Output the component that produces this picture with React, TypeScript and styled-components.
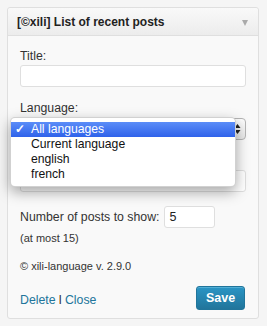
import React from "react";
import styled, { createGlobalStyle } from "styled-components";

const GlobalStyle = createGlobalStyle`
  body {
    margin: 0;
    background: #f5f5f5;
    font-family: "Liberation Sans", Arial, sans-serif;
    color: #333;
  }
`;

const languages = ["All languages", "Current language", "english", "french"];

const App = () => {
  return (
    <>
      <GlobalStyle />
      <Page>
        <Widget>
          <Header>
            <h3>[©xili] List of recent posts</h3>
            <Toggle />
          </Header>
          <Body>
            <Field>
              <Label>Title:</Label>
              <TextInput />
            </Field>
            <Field $gap={2}>
              <Label>Language:</Label>
              <SelectBox>
                <Stepper>
                  <svg width="7" height="12" viewBox="0 0 7 12">
                    <path d="M3.5 1 L6.5 5 L0.5 5 Z" fill="#222" />
                    <path d="M3.5 11 L6.5 7 L0.5 7 Z" fill="#222" />
                  </svg>
                </Stepper>
              </SelectBox>
              <Menu>
                {languages.map((lang, i) => (
                  <MenuItem key={lang} $active={i === 0}>
                    <Check>{i === 0 ? "✓" : ""}</Check>
                    {lang}
                  </MenuItem>
                ))}
              </Menu>
            </Field>
            <Field>
              <Label>Post type:</Label>
              <TextInput />
            </Field>
            <NumberRow>
              <Label>Number of posts to show:</Label>
              <SmallInput defaultValue="5" />
            </NumberRow>
            <Note>(at most 15)</Note>
            <Version>© xili-language v. 2.9.0</Version>
            <Actions>
              <Links>
                <a>Delete</a>
                <Sep>I</Sep>
                <a>Close</a>
              </Links>
              <SaveButton>Save</SaveButton>
            </Actions>
          </Body>
        </Widget>
      </Page>
    </>
  );
};

export default App;

const Page = styled.div`
  padding: 7px 8px 8px 7px;
`;

const Widget = styled.div`
  width: 252px;
  box-sizing: border-box;
  border: 1px solid #dfdfdf;
  border-radius: 3px;
  background: #f9f9f9;
`;

const Header = styled.div`
  height: 27px;
  display: flex;
  align-items: center;
  justify-content: space-between;
  padding: 0 10px 0 9px;
  border-bottom: 1px solid #dfdfdf;
  background: linear-gradient(#f9f9f9, #ececec);
  border-radius: 3px 3px 0 0;

  h3 {
    margin: 0;
    font-size: 12px;
    font-weight: bold;
    color: #222;
  }
`;

const Toggle = styled.span`
  width: 0;
  height: 0;
  margin-top: 3px;
  border-left: 3.5px solid transparent;
  border-right: 3.5px solid transparent;
  border-top: 6px solid #aaa;
`;

const Body = styled.div`
  padding: 12px 12px 8px 12px;
  display: flex;
  flex-direction: column;
`;

const Field = styled.div<{ $gap?: number }>`
  position: relative;
  display: flex;
  flex-direction: column;
  gap: ${({ $gap }) => $gap ?? 1}px;
  margin-bottom: 13px;
`;

const Label = styled.label`
  font-size: 12.3px;
  line-height: 16px;
  color: #333;
`;

const TextInput = styled.input`
  box-sizing: border-box;
  width: 226px;
  height: 22px;
  border: 1px solid #dfdfdf;
  border-radius: 3px;
  background: #fff;
  margin: 0;
  padding: 0 4px;
  outline: none;
`;

const SelectBox = styled.div`
  box-sizing: border-box;
  width: 226px;
  height: 22px;
  border: 1px solid #b5b5b5;
  border-radius: 4px;
  background: linear-gradient(#fdfdfd, #e8e8e8);
  display: flex;
  justify-content: flex-end;
  align-items: center;
  padding-right: 4px;
`;

const Stepper = styled.span`
  display: flex;
`;

const Menu = styled.ul`
  position: absolute;
  left: -10px;
  top: 17px;
  width: 226px;
  box-sizing: border-box;
  margin: 0;
  padding: 4px 0;
  list-style: none;
  background: #fff;
  border: 1px solid rgba(0, 0, 0, 0.18);
  border-radius: 5px;
  box-shadow: 0 5px 14px rgba(0, 0, 0, 0.35);
  z-index: 2;
`;

const MenuItem = styled.li<{ $active?: boolean }>`
  height: 15px;
  line-height: 15px;
  font-size: 12.2px;
  display: flex;
  color: ${({ $active }) => ($active ? "#fff" : "#111")};
  background: ${({ $active }) =>
    $active ? "linear-gradient(#5b8df8, #2f62ea)" : "transparent"};
`;

const Check = styled.span`
  width: 16px;
  padding-left: 4px;
  font-size: 12px;
  font-weight: bold;
`;

const NumberRow = styled.div`
  display: flex;
  align-items: center;
  gap: 5px;
  margin-top: 1px;
`;

const SmallInput = styled.input`
  box-sizing: border-box;
  width: 51px;
  height: 22px;
  border: 1px solid #dfdfdf;
  border-radius: 3px;
  background: #fff;
  margin: 0;
  padding: 0 4px;
  font-family: "Liberation Sans", Arial, sans-serif;
  font-size: 12.5px;
  color: #222;
  outline: none;
`;

const Note = styled.p`
  margin: 3px 0 0;
  font-size: 11px;
  line-height: 14px;
  color: #333;
`;

const Version = styled.p`
  margin: 14px 0 0;
  font-size: 11px;
  line-height: 14px;
  color: #333;
`;

const Actions = styled.div`
  display: flex;
  justify-content: space-between;
  align-items: center;
  margin-top: 13px;
`;

const Links = styled.div`
  font-size: 12.3px;
  color: #21759b;
  display: flex;
  gap: 3px;
  padding-top: 3px;
`;

const Sep = styled.span`
  color: #333;
`;

const SaveButton = styled.button`
  width: 49px;
  height: 24px;
  margin-right: 1px;
  border: 1px solid #21759b;
  border-radius: 3px;
  background: linear-gradient(#2a95c5, #21759b);
  box-shadow: inset 0 1px 0 rgba(120, 200, 230, 0.5);
  color: #fff;
  font-family: "Liberation Sans", Arial, sans-serif;
  font-size: 12.5px;
  font-weight: bold;
  padding: 0;
`;
